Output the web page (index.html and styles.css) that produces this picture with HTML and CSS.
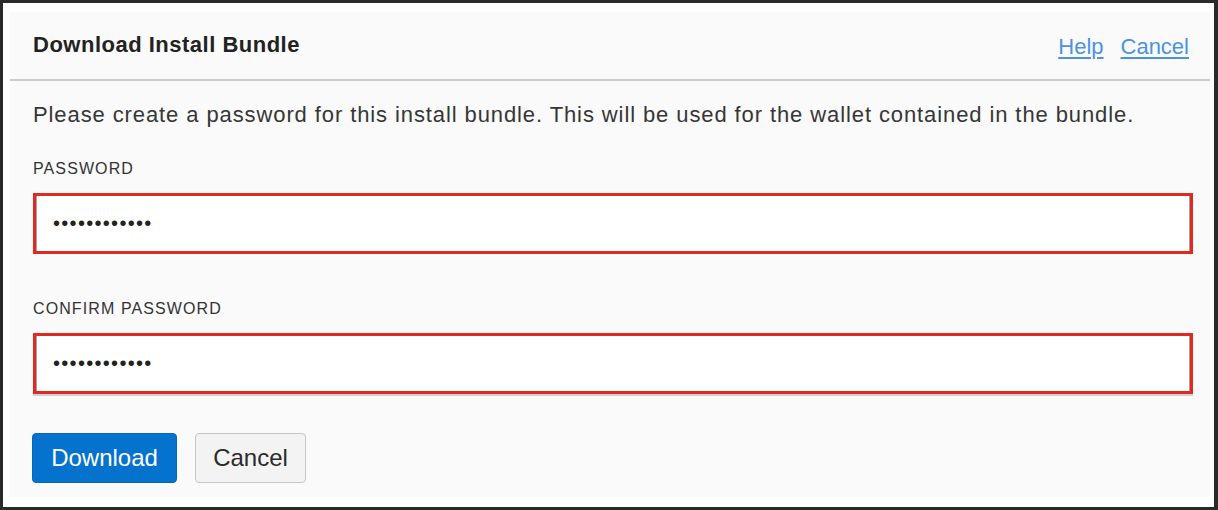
FILE: index.html
```html
<!DOCTYPE html>
<html lang="en">
<head>
<meta charset="utf-8">
<title>Download Install Bundle</title>
<link rel="stylesheet" href="styles.css">
</head>
<body>
<div class="frame">
  <section class="panel">
    <header class="panel-header">
      <h1 class="panel-title">Download Install Bundle</h1>
      <nav class="header-links">
        <a href="#" class="link">Help</a>
        <a href="#" class="link">Cancel</a>
      </nav>
    </header>
    <div class="panel-body">
      <p class="intro">Please create a password for this install bundle. This will be used for the wallet contained in the bundle.</p>
      <div class="field">
        <label class="field-label" for="pw1">PASSWORD</label>
        <input class="field-input" id="pw1" type="password" value="abcdefghijkl">
      </div>
      <div class="field field-second">
        <label class="field-label" for="pw2">CONFIRM PASSWORD</label>
        <input class="field-input field-input-shadow" id="pw2" type="password" value="abcdefghijkl">
      </div>
      <div class="actions">
        <button class="btn btn-primary" type="button">Download</button>
        <button class="btn btn-secondary" type="button">Cancel</button>
      </div>
    </div>
  </section>
</div>
</body>
</html>
```
FILE: styles.css
```css
* { box-sizing: border-box; }
html, body { margin: 0; padding: 0; background: #ffffff; }
body { font-family: "Liberation Sans", Arial, sans-serif; color: #333; }

.frame {
  width: 1218px;
  height: 510px;
  border-style: solid;
  border-color: #2a2a2a;
  border-width: 3px 4px 3px 3px;
  padding: 9px 4px 10px 7px;
  background: #ffffff;
}

.panel {
  width: 1200px;
  height: 485px;
  background: #fafafa;
}

.panel-header {
  height: 69px;
  display: flex;
  align-items: center;
  justify-content: space-between;
  padding: 0 21px 2px 23px;
  border-bottom: 2px solid #c9cdd3;
}

.panel-title {
  margin: 0;
  font-size: 22px;
  font-weight: bold;
  letter-spacing: 0.5px;
  color: #222;
  line-height: 26px;
}

.header-links {
  display: flex;
  gap: 17px;
  padding-top: 4px;
}

.link {
  font-size: 22px;
  color: #4b93e0;
  text-decoration: underline;
  text-underline-offset: 3px;
  line-height: 26px;
}

.panel-body {
  padding: 0 17px 0 23px;
}

.intro {
  margin: 21px 0 0;
  font-size: 22px;
  line-height: 26px;
  letter-spacing: 0.9px;
  color: #363636;
  white-space: nowrap;
}

.field { margin-top: 31px; }
.field-second { margin-top: 45px; }

.field-label {
  display: block;
  font-size: 16px;
  line-height: 20px;
  letter-spacing: 1.1px;
  color: #333;
}

.field-input {
  display: block;
  width: 100%;
  height: 61px;
  margin-top: 14px;
  padding: 0 17px;
  border: 3px solid #e2291f;
  background: #ffffff;
  box-shadow: inset 1px 0 0 #9aa3ad, inset -1px 0 0 #9aa3ad;
  font-family: "Liberation Sans", Arial, sans-serif;
  font-size: 20px;
  letter-spacing: 1.3px;
  color: #222;
  outline: none;
}

.field-input-shadow {
  box-shadow: inset 1px 0 0 #9aa3ad, inset -1px 0 0 #9aa3ad, 0 2px 0 #cdd2da;
}

.actions {
  display: flex;
  gap: 18px;
  margin-top: 39px;
  margin-left: -1px;
}

.btn {
  height: 50px;
  border-radius: 4px;
  font-family: "Liberation Sans", Arial, sans-serif;
  font-size: 24px;
  cursor: pointer;
}

.btn-primary {
  width: 145px;
  background: #0572ce;
  border: 1px solid #0568bd;
  color: #ffffff;
}

.btn-secondary {
  width: 111px;
  background: #f3f3f3;
  border: 1px solid #c3c6cb;
  color: #2b2b2b;
}
```
